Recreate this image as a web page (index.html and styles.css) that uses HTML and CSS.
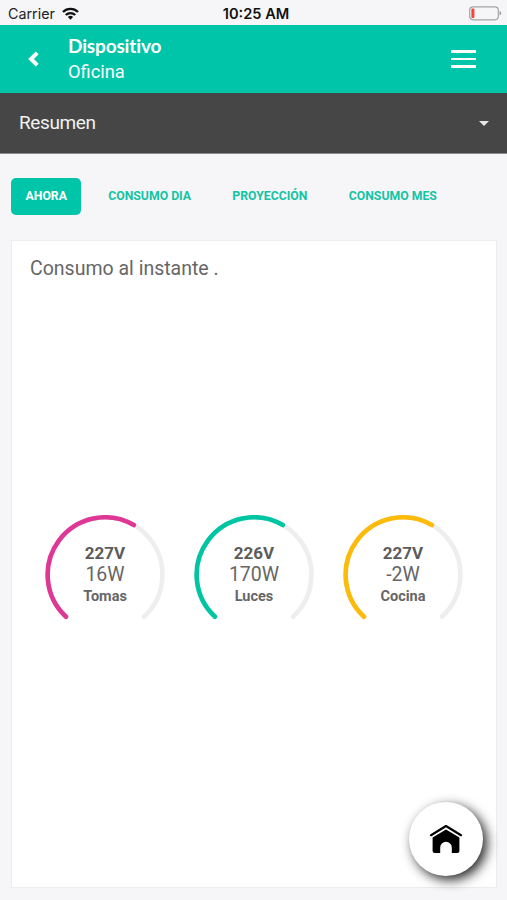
FILE: index.html
```html
<!DOCTYPE html>
<html lang="es">

<head>
  <meta charset="UTF-8">
  <meta name="viewport" content="width=device-width, initial-scale=1.0">
  <title>Dispositivo - Oficina</title>
  <link rel="stylesheet" href="styles.css">
</head>

<body>
  <div class="status-bar">
    <div class="carrier">
      <span>Carrier</span>
      <svg class="wifi" width="17" height="13" viewBox="0 0 17 13" fill="none" stroke="#111" stroke-width="2.3">
        <path d="M1 5 A10.6 10.6 0 0 1 16 5" />
        <path d="M3.8 8 A6.6 6.6 0 0 1 13.2 8" />
        <path d="M8.5 12.8 L5.9 10.1 A3.7 3.7 0 0 1 11.1 10.1 Z" fill="#111" stroke="none" />
      </svg>
    </div>
    <span class="clock">10:25 AM</span>
    <svg class="battery" width="33" height="15" viewBox="0 0 33 15">
      <rect x="0.7" y="0.8" width="28.6" height="13" rx="3.5" fill="none" stroke="#a3a3a8" stroke-width="1.2" />
      <rect x="2.4" y="2.6" width="3" height="9.4" rx="1" fill="#fb4237" />
      <path d="M30.5 5 Q32.3 5.6 32.3 7.3 Q32.3 9 30.5 9.6 Z" fill="#a3a3a8" />
    </svg>
  </div>

  <header class="header">
    <svg class="back" width="12" height="16" viewBox="0 0 12 16" fill="none" stroke="#fff" stroke-width="4">
      <path d="M10.2 1.8 L4 8 L10.2 14.2" />
    </svg>
    <div class="titles">
      <h1>Dispositivo</h1>
      <h2>Oficina</h2>
    </div>
    <div class="menu">
      <span></span>
      <span></span>
      <span></span>
    </div>
  </header>

  <div class="select">
    <span>Resumen</span>
    <span class="arrow"></span>
  </div>

  <nav class="tabs">
    <a class="tab active">AHORA</a>
    <a class="tab">CONSUMO DIA</a>
    <a class="tab">PROYECCIÓN</a>
    <a class="tab">CONSUMO MES</a>
  </nav>

  <main class="card">
    <p class="card-title">Consumo al instante .</p>
    <div class="gauges">
      <div class="gauge pink">
        <svg width="120" height="120" viewBox="0 0 120 120">
          <path class="track" d="M21 101.8 A57.4 57.4 0 1 1 99 101.8" />
          <path class="value" d="M21 101.8 A57.4 57.4 0 0 1 88.8 10.05" />
        </svg>
        <div class="info">
          <b class="volts">227V</b>
          <span class="watts">16W</span>
          <b class="name">Tomas</b>
        </div>
      </div>
      <div class="gauge green">
        <svg width="120" height="120" viewBox="0 0 120 120">
          <path class="track" d="M21 101.8 A57.4 57.4 0 1 1 99 101.8" />
          <path class="value" d="M21 101.8 A57.4 57.4 0 0 1 88.8 10.05" />
        </svg>
        <div class="info">
          <b class="volts">226V</b>
          <span class="watts">170W</span>
          <b class="name">Luces</b>
        </div>
      </div>
      <div class="gauge yellow">
        <svg width="120" height="120" viewBox="0 0 120 120">
          <path class="track" d="M21 101.8 A57.4 57.4 0 1 1 99 101.8" />
          <path class="value" d="M21 101.8 A57.4 57.4 0 0 1 88.8 10.05" />
        </svg>
        <div class="info">
          <b class="volts">227V</b>
          <span class="watts">-2W</span>
          <b class="name">Cocina</b>
        </div>
      </div>
    </div>
  </main>

  <a class="home">
    <svg width="34" height="30" viewBox="0 0 34 30">
      <path d="M2 11.2 L17 2 L32 11.2" fill="none" stroke="#000" stroke-width="2.2" stroke-linecap="round" stroke-linejoin="round" />
      <path d="M3.6 13.4 L17 5.6 L30.4 13.4 V27 Q30.4 29 28.4 29 H22.8 V23.6 A5.8 5.8 0 0 0 11.2 23.6 V29 H5.6 Q3.6 29 3.6 27 Z" fill="#000" />
    </svg>
  </a>
</body>

</html>
```
FILE: styles.css
```css
* {
  box-sizing: border-box;
}

body {
  margin: 0;
  height: 900px;
  display: flex;
  flex-direction: column;
  overflow: hidden;
  background-color: #f6f6f9;
  font-family: Roboto, sans-serif;
  color: #666;
}

.status-bar {
  display: grid;
  grid-template-columns: 1fr auto 1fr;
  align-items: center;
  height: 25px;
  padding: 2px 5px 0 8px;
  font-family: Inter, sans-serif;
  font-size: 14.3px;
  color: #222;
}

.carrier {
  display: flex;
  align-items: center;
  gap: 7px;
}

.clock {
  font-weight: 600;
  font-size: 14.6px;
  color: #111;
  padding-left: 2px;
}

.battery {
  justify-self: end;
}

.header {
  display: flex;
  align-items: center;
  height: 68px;
  padding: 0 31px 0 27px;
  background-color: #00c5a8;
  color: #fff;
}

.titles {
  flex: 1;
  padding-left: 29px;
}

.titles h1 {
  margin: 0;
  font-family: Lato, sans-serif;
  font-size: 19px;
  font-weight: 700;
  letter-spacing: -0.15px;
  line-height: 26px;
}

.titles h2 {
  margin: 0;
  font-size: 18.3px;
  font-weight: 400;
  line-height: 26px;
}

.menu {
  display: flex;
  flex-direction: column;
  gap: 5px;
  width: 25px;
}

.menu span {
  height: 2.5px;
  background-color: #fff;
}

.select {
  display: flex;
  justify-content: space-between;
  align-items: center;
  height: 61px;
  padding: 0 18px 2px 19px;
  border-bottom: 1px solid #8a8a8a;
  background-color: #464646;
  color: #f2f2f2;
  font-size: 19px;
  letter-spacing: -0.4px;
}

.arrow {
  margin-top: 2px;
  border: 5px solid transparent;
  border-top-color: #e6e6e6;
  border-bottom: 0;
}

.tabs {
  display: flex;
  gap: 12.3px;
  padding: 24px 11px 25px;
}

.tab {
  height: 37px;
  padding: 0 14.5px;
  border-radius: 5px;
  font-size: 12.25px;
  font-weight: 700;
  line-height: 36px;
  white-space: nowrap;
  color: #14c3a3;
}

.tab.active {
  background-color: #00c5a8;
  color: #fff;
}

.card {
  flex: 1;
  display: flex;
  flex-direction: column;
  margin: 0 10px 12px 11px;
  border: 1px solid #ececef;
  background-color: #fff;
}

.card-title {
  margin: 0;
  padding: 15px 18px 0;
  font-size: 19.5px;
  line-height: 25px;
}

.gauges {
  display: flex;
  justify-content: center;
  gap: 29px;
  padding-top: 234px;
}

.gauge {
  display: grid;
}

.gauge svg,
.info {
  grid-area: 1 / 1;
}

.gauge path {
  fill: none;
  stroke-width: 4.6;
  stroke-linecap: round;
}

.gauge .track {
  stroke: #eee;
}

.pink .value {
  stroke: #de3796;
}

.green .value {
  stroke: #00c5a3;
}

.yellow .value {
  stroke: #fcbb08;
}

.info {
  display: flex;
  flex-direction: column;
  align-items: center;
  padding-top: 28px;
  line-height: 21px;
}

.volts {
  font-size: 17px;
  color: #5c5c5c;
}

.watts {
  font-size: 19.5px;
  line-height: 22px;
}

.name {
  font-size: 14.5px;
  line-height: 21px;
}

/* floating button, over the card */
.home {
  position: absolute;
  right: 24px;
  bottom: 24px;
  display: flex;
  justify-content: center;
  align-items: center;
  width: 74px;
  height: 74px;
  border-radius: 50%;
  background-color: #fff;
  box-shadow: 4px 4px 12px rgba(0, 0, 0, 0.85);
}
```
